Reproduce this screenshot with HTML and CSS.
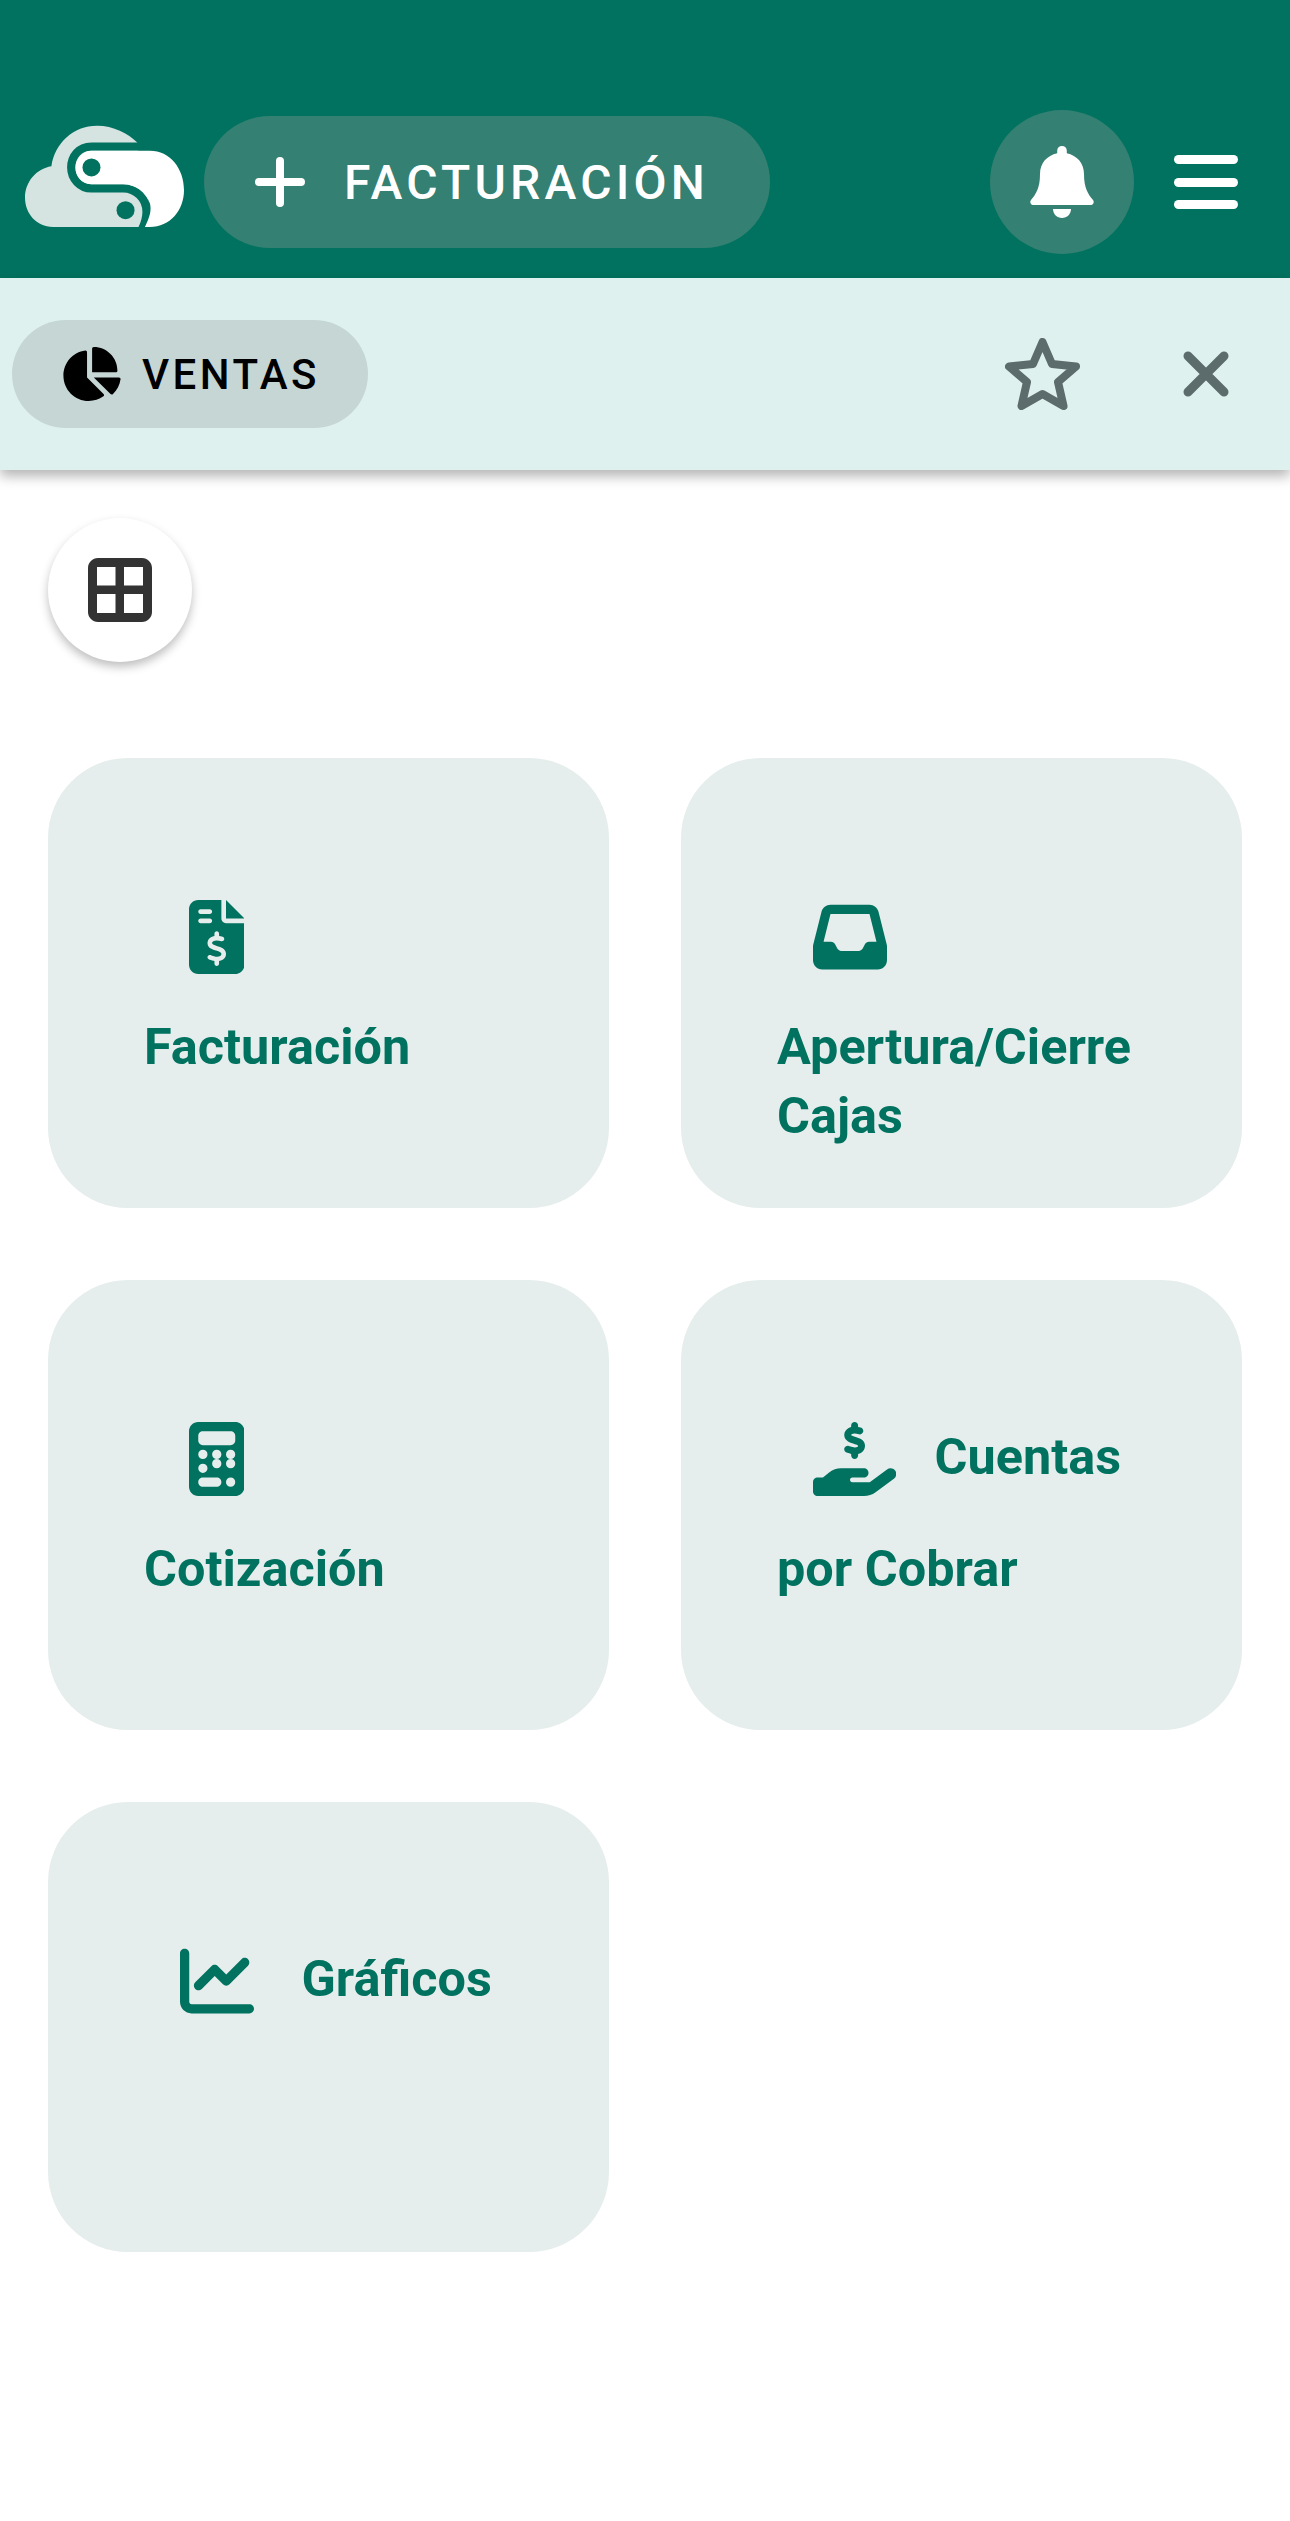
FILE: index.html
```html
<!DOCTYPE html>
<html lang="es">
<head>
  <meta charset="UTF-8" />
  <meta name="viewport" content="width=device-width, initial-scale=1.0" />
  <title>Facturación</title>
  <link rel="stylesheet" href="styles.css">
</head>
<body>

  <!-- Cabecera -->
  <header class="topbar">
    <svg class="logo" viewBox="46 45 476 305">
      <path class="logo-pale" d="M130 350C80 350 46 310 46 262C46 215 80 175 125 168C135 100 190 47 262 47C310 47 355 70 382 97V115L420 200L410 350Z"/>
      <path class="logo-band" d="M400 109.5H245C206 109.5 184.5 140 184.5 172C184.5 205 210 234.5 245 234.5H340C378 234.5 410 265 410 305C410 325 405 340 395 360"/>
      <path class="logo-white" d="M245 122H420C480 122 522 175 522 240C522 300 480 350 420 350H405C420 320 425 300 420 280C410 245 375 222 340 222H245C215 222 197 198 197 172C197 145 220 122 245 122Z"/>
      <circle class="logo-hole" cx="245" cy="172" r="27"/>
      <circle class="logo-hole" cx="347" cy="300" r="27"/>
    </svg>

    <a class="new-button" href="#">
      <svg class="plus" viewBox="0 0 50 50"><path d="M25 4V46M4 25H46"/></svg>
      <span>FACTURACIÓN</span>
    </a>

    <button class="bell-button">
      <svg class="bell" viewBox="0 0 64 72">
        <path d="M32 0c2.8 0 4.8 2 4.8 4.8v2.4C47 9.4 54 17 54 28c0 14 4 20 9 26 1.5 2 .5 5-2 5H3c-2.5 0-3.5-3-2-5 5-6 9-12 9-26 0-11 7-18.6 17.2-20.8V4.8C27.2 2 29.2 0 32 0z"/>
        <path d="M23 63h18c0 5-4 9-9 9s-9-4-9-9z"/>
      </svg>
    </button>

    <div class="burger">
      <span></span>
      <span></span>
      <span></span>
    </div>
  </header>

  <!-- Barra de modulo -->
  <div class="modulebar">
    <div class="chip">
      <svg class="chip-icon" viewBox="32 0 542 512">
        <path d="M304 240V16.6c0-9 7-16.6 16-16.6C443.7 0 544 100.3 544 224c0 9-7.6 16-16.6 16H304zM32 272C32 150.7 122.1 50.3 239 34.3c9.2-1.3 17 6 17 15.3V288L412.5 444.5c6.7 6.7 6.2 17.7-1.5 23.1C371.8 495.6 323.8 512 272 512C139.5 512 32 404.6 32 272zm526.4 16c9.3 0 16.6 7.8 15.4 17c-7.7 55.9-34.6 105.6-73.9 142.3c-6 5.6-15.4 5.2-21.2-.7L320 288H558.4z"/>
      </svg>
      <span>VENTAS</span>
    </div>
    <svg class="star" viewBox="0 0 75 72">
      <path d="M37.5 4L47 26L71 28.5L53 44L58.5 68L37.5 56L16.5 68L22 44L4 28.5L28 26Z"/>
    </svg>
    <svg class="close" viewBox="0 0 46 46"><path d="M5 5L41 41M41 5L5 41"/></svg>
  </div>

  <main class="content">
    <button class="view-button">
      <svg class="view-icon" viewBox="0 0 64 64">
        <path fill-rule="evenodd" d="M10 0H54C59.5 0 64 4.500 64 10V54C64 59.500 59.500 64 54 64H10C4.500 64 0 59.500 0 54V10C0 4.500 4.500 0 10 0ZM9 9V27.500H27.500V9ZM36 9V27.500H55V9ZM9 36V55H27.500V36ZM36 36V55H55V36Z"/>
      </svg>
    </button>

    <div class="cards">
      <a class="card" href="#">
        <span class="card-icon">
          <svg class="icon-doc" viewBox="0 0 384 512"><path d="M64 0C28.7 0 0 28.7 0 64V448c0 35.3 28.7 64 64 64H320c35.3 0 64-28.7 64-64V160H256c-17.7 0-32-14.3-32-32V0H64zM256 0V128H384L256 0zM64 80c0-8.800 7.200-16 16-16h64c8.800 0 16 7.200 16 16s-7.200 16-16 16H80c-8.800 0-16-7.200-16-16zm0 64c0-8.800 7.200-16 16-16h64c8.800 0 16 7.200 16 16s-7.200 16-16 16H80c-8.800 0-16-7.200-16-16zm128 72c8.800 0 16 7.200 16 16v17.300c8.500 1.200 16.700 3.100 24.100 5.100c8.500 2.300 13.600 11 11.300 19.600s-11 13.600-19.600 11.300c-11.100-3-22-5.200-32.100-5.300c-8.400-.1-17.400 1.800-23.600 5.500c-5.700 3.400-8.100 7.300-8.100 12.800c0 3.700 1.300 6.500 7.300 10.100c6.900 4.100 16.600 7.100 29.200 10.900l.5 .1c11.300 3.400 25.300 7.600 36.300 14.600c12.100 7.600 22.400 19.700 22.700 38.200c.3 19.300-9.600 33.300-22.900 41.600c-7.700 4.800-16.400 7.600-25.100 9.100V440c0 8.800-7.200 16-16 16s-16-7.200-16-16V422.200c-11.200-2.100-21.700-5.700-30.900-8.900c-2.100-.7-4.200-1.400-6.200-2.100c-8.400-2.800-12.900-11.900-10.100-20.200s11.900-12.900 20.200-10.100c2.500 .8 4.800 1.600 7.100 2.400c13.600 4.600 24.600 8.400 36.300 8.700c9.100 .3 17.900-1.700 23.700-5.300c5.100-3.200 7.900-7.300 7.800-14c-.1-4.600-1.800-7.800-7.700-11.600c-6.800-4.300-16.500-7.400-29-11.200l-1.600-.5c-11-3.300-24.300-7.300-34.800-13.700c-12-7.200-22.600-18.900-22.700-37.300c-.1-19.400 10.800-32.800 23.800-40.500c7.500-4.400 15.800-7.200 24.100-8.700V232c0-8.800 7.200-16 16-16z"/></svg>
        </span>
        Facturación
      </a>

      <a class="card" href="#">
        <span class="card-icon">
          <svg class="icon-wide" viewBox="0 0 512 512"><path d="M121 32C91.600 32 66 52 58.900 80.500L1.900 308.400C.6 313.500 0 318.700 0 323.900V416c0 35.300 28.700 64 64 64H448c35.300 0 64-28.700 64-64V323.900c0-5.200-.6-10.400-1.900-15.500l-57-227.900C446 52 420.400 32 391 32H121zm0 64H391l48 192H387.800c-12.100 0-23.200 6.800-28.600 17.700l-14.300 28.600c-5.400 10.800-16.500 17.700-28.600 17.700H195.800c-12.100 0-23.200-6.800-28.600-17.700l-14.300-28.600c-5.400-10.800-16.500-17.700-28.600-17.700H73L121 96z"/></svg>
        </span>
        Apertura/Cierre Cajas
      </a>

      <a class="card" href="#">
        <span class="card-icon">
          <svg class="icon-doc" viewBox="0 0 384 512"><path d="M64 0C28.700 0 0 28.700 0 64V448c0 35.300 28.700 64 64 64H320c35.300 0 64-28.700 64-64V64c0-35.300-28.700-64-64-64H64zM96 64H288c17.700 0 32 14.300 32 32v32c0 17.700-14.300 32-32 32H96c-17.700 0-32-14.300-32-32V96c0-17.700 14.300-32 32-32zm32 160a32 32 0 1 1 -64 0 32 32 0 1 1 64 0zM96 352a32 32 0 1 1 0-64 32 32 0 1 1 0 64zM64 416c0-17.700 14.300-32 32-32h96c17.700 0 32 14.300 32 32s-14.300 32-32 32H96c-17.700 0-32-14.300-32-32zM192 256a32 32 0 1 1 0-64 32 32 0 1 1 0 64zm32 32a32 32 0 1 1 -64 0 32 32 0 1 1 64 0zm64-32a32 32 0 1 1 0-64 32 32 0 1 1 0 64zm32 32a32 32 0 1 1 -64 0 32 32 0 1 1 64 0zM288 448a32 32 0 1 1 0-64 32 32 0 1 1 0 64z"/></svg>
        </span>
        Cotización
      </a>

      <a class="card" href="#">
        <span class="card-icon">
          <svg class="icon-hand" viewBox="0 0 576 512"><path d="M312 24V34.500c6.400 1.200 12.600 2.700 18.200 4.200c12.800 3.400 20.400 16.600 17 29.400s-16.600 20.400-29.400 17c-10.900-2.900-21.100-4.900-30.200-5c-7.300-.1-14.700 1.700-19.400 4.400c-2.100 1.300-3.100 2.400-3.500 3c-.3 .5-.7 1.200-.7 2.800c0 .3 0 .5 0 .6c.2 .2 .9 1.200 3.300 2.600c5.800 3.500 14.400 6.200 27.400 10.100l.9 .3c11.100 3.300 25.900 7.800 37.900 15.300c13.700 8.600 26.100 22.900 26.400 44.900c.3 22.500-11.400 38.900-26.700 48.500c-6.700 4.100-13.900 7-21.100 8.800V232c0 13.300-10.700 24-24 24s-24-10.700-24-24V220.600c-9.500-2.300-18.200-5.300-25.600-7.800c-2.100-.7-4.100-1.400-6-2c-12.600-4.200-19.400-17.800-15.200-30.400s17.800-19.400 30.400-15.200c2.600 .9 5 1.700 7.300 2.500c13.600 4.600 23.400 7.900 33.900 8.300c8 .3 15.100-1.600 19.200-4.100c1.900-1.200 2.800-2.200 3.200-2.900c.4-.6 .9-1.800 .8-4.100l0-.2c0-1 0-2.100-4-4.600c-5.700-3.600-14.300-6.400-27.100-10.300l-1.900-.6c-10.800-3.200-25-7.500-36.400-14.400c-13.500-8.100-26.500-22-26.600-44.100c-.1-22.900 12.900-38.600 27.700-47.400c6.400-3.800 13.300-6.400 20.200-8.200V24c0-13.300 10.700-24 24-24s24 10.700 24 24zM568.200 336.300c13.100 17.800 9.300 42.800-8.500 55.900L433.100 485.500c-23.400 17.200-51.600 26.500-80.700 26.500H192 32c-17.700 0-32-14.300-32-32V416c0-17.700 14.300-32 32-32H68.800l44.900-36c22.700-18.200 50.900-28 80-28H272h16 64c17.700 0 32 14.300 32 32s-14.300 32-32 32H288 272c-8.800 0-16 7.200-16 16s7.200 16 16 16H392.600l119.700-88.200c17.800-13.100 42.800-9.300 55.900 8.500z"/></svg>
        </span>
        Cuentas por Cobrar
      </a>

      <a class="card" href="#">
        <span class="card-icon">
          <svg class="icon-wide" viewBox="0 0 512 512"><path d="M64 64c0-17.700-14.300-32-32-32S0 46.300 0 64V400c0 44.200 35.800 80 80 80H480c17.700 0 32-14.300 32-32s-14.300-32-32-32H80c-8.800 0-16-7.200-16-16V64zm406.600 86.600c12.500-12.500 12.500-32.800 0-45.300s-32.800-12.500-45.300 0L320 210.700l-57.400-57.400c-12.500-12.500-32.800-12.500-45.300 0l-112 112c-12.500 12.500-12.500 32.800 0 45.300s32.800 12.500 45.300 0L240 221.300l57.400 57.400c12.500 12.500 32.800 12.500 45.300 0l128-128z"/></svg>
        </span>
        Gráficos
      </a>
    </div>
  </main>

</body>
</html>
```

FILE: styles.css
```css
body {
  margin: 0;
  height: 2521px;
  overflow: hidden;
  background: white;
  font-family: Roboto, "Liberation Sans", sans-serif;
}

.topbar {
  display: flex;
  align-items: center;
  box-sizing: border-box;
  height: 278px;
  padding: 86px 52px 0 25px;
  background: #00725f;
}

.logo {
  width: 159px;
  height: 102px;
  margin: 0 20px 12px 0;
}

.logo-pale { fill: #d5e4e1; }
.logo-white { fill: white; }
.logo-hole { fill: #00725f; }

.logo-band {
  fill: none;
  stroke: #00725f;
  stroke-width: 25;
}

.new-button {
  display: flex;
  align-items: center;
  gap: 39px;
  box-sizing: border-box;
  width: 566px;
  height: 132px;
  padding-left: 51px;
  border-radius: 66px;
  background: #348073;
  color: white;
  font-size: 48px;
  font-weight: 500;
  letter-spacing: 4.200px;
  text-decoration: none;
}

.plus {
  width: 50px;
  height: 50px;
  fill: none;
  stroke: white;
  stroke-width: 8;
  stroke-linecap: round;
}

.bell-button {
  display: flex;
  align-items: center;
  justify-content: center;
  width: 144px;
  height: 144px;
  margin-left: auto;
  padding: 0;
  border: none;
  border-radius: 50%;
  background: #348073;
}

.bell {
  width: 64px;
  height: 72px;
  fill: white;
}

.burger {
  display: flex;
  flex-direction: column;
  gap: 13.500px;
  width: 64px;
  margin-left: 40px;
}

.burger span {
  height: 9px;
  border-radius: 5px;
  background: white;
}

.modulebar {
  position: relative;
  display: flex;
  align-items: center;
  box-sizing: border-box;
  height: 192px;
  padding: 0 61px 0 12px;
  background: #dff1ee;
  box-shadow: 0 6px 12px rgba(0, 0, 0, 0.3);
}

.chip {
  display: flex;
  align-items: center;
  gap: 21px;
  box-sizing: border-box;
  width: 356px;
  height: 108px;
  padding-left: 51px;
  border-radius: 54px;
  background: #c5d6d5;
  color: black;
  font-size: 42px;
  font-weight: 500;
  letter-spacing: 3.500px;
}

.chip-icon {
  width: 58px;
  height: 54px;
}

.star {
  width: 75px;
  height: 72px;
  margin-left: auto;
  fill: none;
  stroke: #5c6b6b;
  stroke-width: 8;
  stroke-linejoin: round;
}

.close {
  width: 46px;
  height: 46px;
  margin-left: 103px;
  fill: none;
  stroke: #5c6b6b;
  stroke-width: 9;
  stroke-linecap: round;
}

.content {
  padding: 48px 48px 0;
}

.view-button {
  display: flex;
  align-items: center;
  justify-content: center;
  width: 144px;
  height: 144px;
  padding: 0;
  border: none;
  border-radius: 50%;
  background: white;
  box-shadow: 0 5px 10px rgba(0, 0, 0, 0.25);
}

.view-icon {
  width: 64px;
  height: 64px;
  fill: #333;
}

.cards {
  display: grid;
  grid-template-columns: 1fr 1fr;
  gap: 72px;
  margin-top: 96px;
}

.card {
  box-sizing: border-box;
  height: 450px;
  padding: 104px 96px 0;
  border-radius: 80px;
  background: #e5eeec;
  color: #00725f;
  font-size: 50.400px;
  font-weight: 700;
  line-height: 69px;
  text-decoration: none;
}

.card-icon {
  display: inline-flex;
  align-items: center;
  justify-content: center;
  width: 145px;
  height: 150px;
  vertical-align: -22px;
}

.card-icon svg { fill: #00725f; }

.icon-doc {
  width: 55.500px;
  height: 74px;
}

.icon-wide {
  width: 74px;
  height: 74px;
}

.icon-hand {
  width: 83.250px;
  height: 74px;
  margin-left: 10px;
}
```
